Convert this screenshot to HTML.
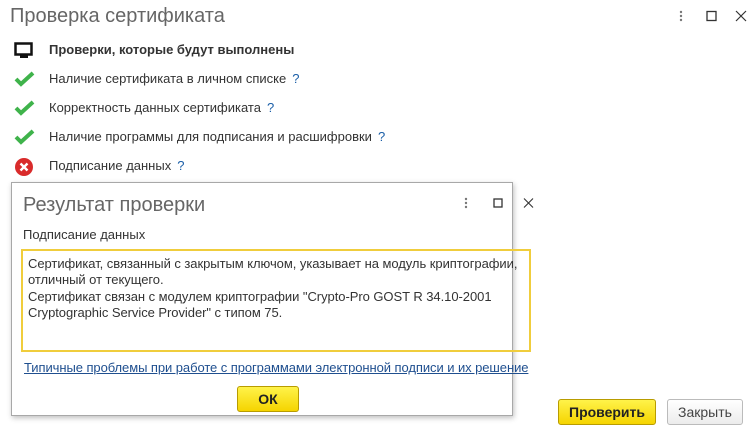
<!DOCTYPE html>
<html><head><meta charset="utf-8"><style>
body{margin:0;width:755px;height:427px;background:#fff;font-family:"Liberation Sans",sans-serif;position:relative;overflow:hidden;color:#333}
.a{position:absolute;white-space:nowrap}
.t{font-size:13px;line-height:16px}
.q{color:#1b5fa8;margin-left:6px}
.btn{position:absolute;border-radius:3px;font-size:14px;text-align:center;box-sizing:border-box}
.y{background:linear-gradient(#fff34a,#f5d400);border:1px solid #b89c00;font-weight:bold;color:#222}
</style></head><body>
<div class="a" style="left:10px;top:5px;font-size:20px;color:#666">Проверка сертификата</div>
<svg class="a" style="left:672px;top:9px" width="80" height="16"><g fill="#777"><circle cx="9" cy="3" r="1.2"/><circle cx="9" cy="7" r="1.2"/><circle cx="9" cy="11" r="1.2"/></g><rect x="35" y="2.5" width="9" height="9" fill="none" stroke="#333" stroke-width="1.3"/><path d="M64 2l10 10M74 2L64 12" stroke="#333" stroke-width="1.2"/></svg>
<svg class="a" style="left:14px;top:42px" width="20" height="18"><rect x="1.5" y="1.5" width="16" height="11" fill="none" stroke="#111" stroke-width="2.5"/><rect x="6" y="13" width="8" height="3" fill="#111"/></svg>
<div class="a t" style="left:49px;top:42px;font-weight:bold">Проверки, которые будут выполнены</div>
<svg class="a" style="left:14px;top:71px" width="22" height="16"><path d="M2 8l5 5L19 2" fill="none" stroke="#3fb34b" stroke-width="4"/></svg>
<div class="a t" style="left:49px;top:71px">Наличие сертификата в личном списке<span class="q">?</span></div>
<svg class="a" style="left:14px;top:100px" width="22" height="16"><path d="M2 8l5 5L19 2" fill="none" stroke="#3fb34b" stroke-width="4"/></svg>
<div class="a t" style="left:49px;top:100px">Корректность данных сертификата<span class="q">?</span></div>
<svg class="a" style="left:14px;top:129px" width="22" height="16"><path d="M2 8l5 5L19 2" fill="none" stroke="#3fb34b" stroke-width="4"/></svg>
<div class="a t" style="left:49px;top:129px">Наличие программы для подписания и расшифровки<span class="q">?</span></div>
<svg class="a" style="left:14px;top:157px" width="20" height="20"><circle cx="10" cy="10" r="9" fill="#d92b2b"/><path d="M6.5 6.5l7 7M13.5 6.5l-7 7" stroke="#fff" stroke-width="2.4"/></svg>
<div class="a t" style="left:49px;top:158px">Подписание данных<span class="q">?</span></div>

<div class="a" style="left:11px;top:182px;width:500px;height:232px;border:1px solid #a8a8a8;background:#fff;box-shadow:1px 2px 5px rgba(0,0,0,.25)">
<div class="a" style="left:11px;top:11px;font-size:20px;color:#666">Результат проверки</div>
<svg class="a" style="left:447px;top:13px" width="80" height="16"><g fill="#777"><circle cx="7" cy="3" r="1.2"/><circle cx="7" cy="7" r="1.2"/><circle cx="7" cy="11" r="1.2"/></g><rect x="35" y="3" width="8" height="8" fill="none" stroke="#333" stroke-width="1.3"/><path d="M65 2.5l9 9M74 2.5l-9 9" stroke="#333" stroke-width="1.1"/></svg>
<div class="a t" style="left:11px;top:44px">Подписание данных</div>
<div class="a" style="left:9px;top:66px;width:510px;height:103px;box-sizing:border-box;border:2px solid #f0cd3c"></div>
<div class="a" style="left:16px;top:73px;font-size:13px;line-height:16.3px;color:#333;letter-spacing:-0.05px">Сертификат, связанный с закрытым ключом, указывает на модуль криптографии,<br>отличный от текущего.<br>Сертификат связан с модулем криптографии "Crypto-Pro GOST R 34.10-2001<br>Cryptographic Service Provider" с типом 75.</div>
<div class="a t" style="left:12px;top:177px;color:#1f4f8f;text-decoration:underline;letter-spacing:-0.07px">Типичные проблемы при работе с программами электронной подписи и их решение</div>
<div class="btn y" style="left:225px;top:203px;width:62px;height:26px;line-height:24px">ОК</div>
</div>

<div class="btn y" style="left:558px;top:399px;width:98px;height:26px;line-height:24px">Проверить</div>
<div class="btn" style="left:667px;top:399px;width:76px;height:26px;line-height:24px;border:1px solid #bbb;background:linear-gradient(#fff,#ececec);color:#444">Закрыть</div>
</body></html>
